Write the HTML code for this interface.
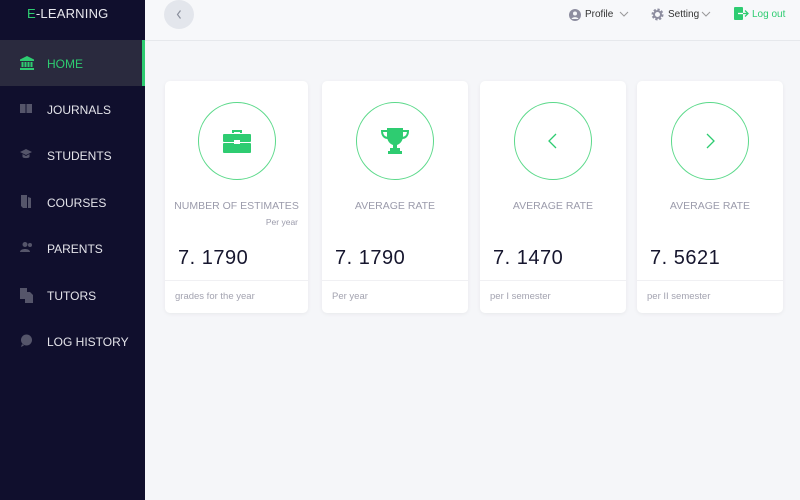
<!DOCTYPE html>
<html><head><style>
*{margin:0;padding:0;box-sizing:border-box}
body{width:800px;height:500px;background:#f5f6f9;font-family:"Liberation Sans",sans-serif;position:relative;overflow:hidden}
.side{position:absolute;left:0;top:0;width:145px;height:500px;background:#100f2d}
.logo{position:absolute;left:27px;top:6px;color:#e8e8ee;font-size:13px;letter-spacing:.2px}
.logo span{color:#2ecc71}
.item{position:absolute;left:0;width:145px;height:46px;color:#e4e4ea;font-size:12px}
.item .t{position:absolute;left:47px;top:17px}
.item svg{position:absolute;left:20px;top:16px}
.item.act{background:#2a2a3e;color:#2ecc71}
.item.act:after{content:"";position:absolute;right:0;top:0;width:3px;height:46px;background:#2ecc71}
.hdr{position:absolute;left:145px;top:0;right:0;height:41px;background:#f7f8fa;border-bottom:1px solid #e6e8ec}
.back{position:absolute;left:164px;top:0;width:30px;height:29px;border-radius:50%;background:#e3e6ec}
.hi{position:absolute;top:9px;font-size:10px;color:#333}
.card{position:absolute;top:81px;height:232px;background:#fff;border-radius:5px;box-shadow:0 1px 4px rgba(0,0,0,.06)}
.circ{position:absolute;top:21px;left:50%;margin-left:-39px;width:78px;height:78px;border:1px solid #5bd98a;border-radius:50%}
.circ svg{position:absolute;left:50%;top:50%;transform:translate(-50%,-50%)}
.tt{position:absolute;top:119px;width:100%;text-align:center;color:#9b9bab;font-size:10.5px}
.py{position:absolute;top:136px;right:10px;color:#9b9bab;font-size:8.5px}
.num{position:absolute;top:166px;left:13px;font-size:20px;color:#16162e;letter-spacing:.5px}
.ft{position:absolute;top:199px;left:0;width:100%;border-top:1px solid #f0f0f3;padding:10px 10px;font-size:9.5px;color:#a3a3b0}
</style></head><body>
<div class="side">
<div class="logo"><span>E</span>-LEARNING</div>
<div class="item act" style="top:40px"><svg width="14" height="14" viewBox="0 0 14 14" fill="#2ecc71"><path d="M7 0L0 3.5V5h14V3.5z"/><rect x="1.5" y="6" width="2" height="5"/><rect x="4.5" y="6" width="2" height="5"/><rect x="7.5" y="6" width="2" height="5"/><rect x="10.5" y="6" width="2" height="5"/><rect x="0" y="12" width="14" height="2"/></svg><span class="t">HOME</span></div>
<div class="item" style="top:86px"><svg width="12" height="12" viewBox="0 0 12 12" fill="#55556a"><rect x="0" y="2" width="5.5" height="9"/><rect x="6.5" y="2" width="5.5" height="9"/></svg><span class="t">JOURNALS</span></div>
<div class="item" style="top:132px"><svg width="12" height="12" viewBox="0 0 12 12" fill="#55556a"><path d="M6 1L0 4l6 3 6-3zM2.5 6v3c1 1.5 6 1.5 7 0V6L6 8z"/></svg><span class="t">STUDENTS</span></div>
<div class="item" style="top:179px"><svg width="12" height="13" viewBox="0 0 12 13" fill="#55556a"><path d="M1 0h6v13H3L1 11zM8 2l3 1v10H8z"/></svg><span class="t">COURSES</span></div>
<div class="item" style="top:225px"><svg width="13" height="12" viewBox="0 0 13 12" fill="#55556a"><circle cx="5" cy="3.5" r="2.5"/><path d="M0 11c0-4 10-4 10 0z"/><circle cx="10" cy="4" r="2"/></svg><span class="t">PARENTS</span></div>
<div class="item" style="top:272px"><svg width="13" height="15" viewBox="0 0 13 15" fill="#55556a"><rect x="0" y="0" width="7" height="11"/><path d="M5 4h5l3 3v8H5z"/></svg><span class="t">TUTORS</span></div>
<div class="item" style="top:318px"><svg width="13" height="13" viewBox="0 0 13 13" fill="#55556a"><circle cx="6.5" cy="6" r="5.5"/><path d="M2 10L1 13l3-1.5z"/></svg><span class="t">LOG HISTORY</span></div>
</div>
<div class="hdr"></div>
<div class="back"><svg width="30" height="29" viewBox="0 0 30 29"><path d="M16.5 10.5l-3 4 3 4" stroke="#8a8f9c" stroke-width="1.2" fill="none"/></svg></div>
<svg style="position:absolute;left:569px;top:9px" width="12" height="12" viewBox="0 0 12 12"><circle cx="6" cy="6" r="6" fill="#8e8ea0"/><circle cx="6" cy="4.5" r="2" fill="#f7f8fa"/><path d="M2.5 10c1-2.5 6-2.5 7 0" fill="#f7f8fa"/></svg>
<span class="hi" style="left:585px">Profile</span>
<svg style="position:absolute;left:619px;top:11px" width="10" height="7"><path d="M1 1l4 4 4-4" stroke="#999" fill="none"/></svg>
<svg style="position:absolute;left:651px;top:8px" width="13" height="13" viewBox="0 0 13 13"><circle cx="6.5" cy="6.5" r="4.5" fill="none" stroke="#8e8ea0" stroke-width="3" stroke-dasharray="2 1.5"/><circle cx="6.5" cy="6.5" r="3.5" fill="none" stroke="#8e8ea0" stroke-width="2"/></svg>
<span class="hi" style="left:668px">Setting</span>
<svg style="position:absolute;left:701px;top:11px" width="10" height="7"><path d="M1 1l4 4 4-4" stroke="#999" fill="none"/></svg>
<svg style="position:absolute;left:734px;top:7px" width="16" height="13" viewBox="0 0 16 13"><rect x="0" y="0" width="9" height="13" rx="1" fill="#2ecc71"/><path d="M4 6.5h10M11 3.5l3 3-3 3" stroke="#2ecc71" stroke-width="1.3" fill="none"/><path d="M4 6.5h5" stroke="#fff" stroke-width="1.3"/></svg>
<span class="hi" style="left:752px;color:#2ecc71">Log out</span>

<div class="card" style="left:165px;width:143px"><div class="circ"><svg width="28" height="24" viewBox="0 0 28 24" fill="#2ecc71"><path d="M9 4V1h10v3h-2V3h-6v1z"/><rect x="0" y="5" width="28" height="8" rx="1"/><rect x="0" y="14" width="28" height="10" rx="1"/><rect x="11" y="11" width="6" height="4" fill="#fff"/></svg></div><div class="tt">NUMBER OF ESTIMATES</div><div class="py">Per year</div><div class="num">7. 1790</div><div class="ft">grades for the year</div></div>
<div class="card" style="left:322px;width:146px"><div class="circ"><svg width="28" height="26" viewBox="0 0 28 26" fill="#2ecc71"><path d="M6 0h16v8c0 5-3 8-6 9v3h3v3h2v3H7v-3h2v-3h3v-3c-3-1-6-4-6-9z"/><path d="M6 3H1c0 5 3 7 6 7M22 3h5c0 5-3 7-6 7" stroke="#2ecc71" stroke-width="2" fill="none"/></svg></div><div class="tt">AVERAGE RATE</div><div class="num">7. 1790</div><div class="ft">Per year</div></div>
<div class="card" style="left:480px;width:146px"><div class="circ"><svg width="14" height="18"><path d="M10 2L3 9l7 7" stroke="#2ecc71" stroke-width="1.3" fill="none"/></svg></div><div class="tt">AVERAGE RATE</div><div class="num">7. 1470</div><div class="ft">per I semester</div></div>
<div class="card" style="left:637px;width:146px"><div class="circ"><svg width="14" height="18"><path d="M4 2l7 7-7 7" stroke="#2ecc71" stroke-width="1.3" fill="none"/></svg></div><div class="tt">AVERAGE RATE</div><div class="num">7. 5621</div><div class="ft">per II semester</div></div>
</body></html>
